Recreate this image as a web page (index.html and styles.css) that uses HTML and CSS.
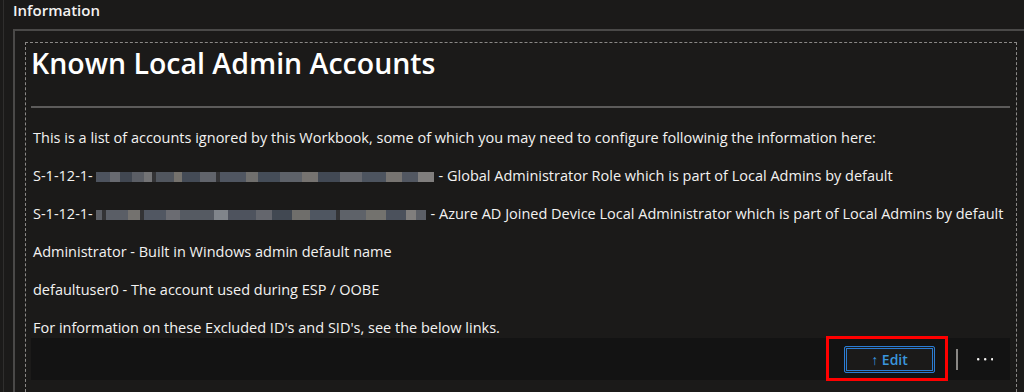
FILE: index.html
```html
<!DOCTYPE html>
<html lang="en">
<head>
    <meta charset="UTF-8">
    <title>Information</title>
    <link rel="stylesheet" href="styles.css">
</head>
<body>
    <div class="page">
        <h2 class="section-title">Information</h2>

        <div class="group">
            <div class="text-step">
                <h1>Known Local Admin Accounts</h1>
                <hr>
                <p>This is a list of accounts ignored by this Workbook, some of which you may need to configure followinig the information here:</p>
                <p>S-1-12-1-<span class="blurred sid-a"></span> - Global Administrator Role which is part of Local Admins by default</p>
                <p>S-1-12-1-<span class="blurred sid-b"></span> - Azure AD Joined Device Local Administrator which is part of Local Admins by default</p>
                <p>Administrator - Built in Windows admin default name</p>
                <p>defaultuser0 - The account used during ESP / OOBE</p>
                <p>For information on these Excluded ID's and SID's, see the below links.</p>

                <div class="step-toolbar">
                    <div class="edit-wrap">
                        <button class="edit-btn">&#8593; Edit</button>
                        <span class="highlight"></span>
                    </div>
                    <span class="divider"></span>
                    <svg class="more" width="16" height="4" viewBox="0 0 16 4">
                        <rect x="0" y="1" width="2.4" height="2.4" rx="1" fill="#f3f2f1"/>
                        <rect x="7" y="1" width="2.4" height="2.4" rx="1" fill="#f3f2f1"/>
                        <rect x="14" y="1" width="2.4" height="2.4" rx="1" fill="#f3f2f1"/>
                    </svg>
                </div>
            </div>
        </div>
    </div>
</body>
</html>
```

FILE: styles.css
```css
* {
    box-sizing: border-box;
}

body {
    margin: 0;
    background: #1b1a19;
    color: #f3f2f1;
    font-family: 'Open Sans', 'Noto Sans', sans-serif;
    overflow: hidden;
    height: 392px;
}

.page {
    margin-left: 3px;
    margin-right: -10px;
    border-left: 1px solid #2f2e2d;
    padding-left: 9px;
    height: 392px;
    overflow: hidden;
}

.section-title {
    margin: 0 0 9px;
    font-size: 15px;
    line-height: 20px;
    font-weight: 600;
    color: #f3f2f1;
}

.group {
    border-top: 2px solid #4a4948;
    border-left: 2px solid #4a4948;
    padding: 11px 17px 0 10px;
    height: 363px;
}

.text-step {
    border: 1px dashed #8a8886;
    border-bottom: none;
    padding: 0 6px 0 5px;
    height: 350px;
}

h1 {
    margin: 2px 0 0;
    font-size: 28.5px;
    line-height: 36px;
    font-weight: 600;
    color: #ffffff;
}

hr {
    margin: 25px 0 20px;
    border: none;
    border-top: 2px solid #5c5b5a;
}

p {
    margin: 0 0 18px;
    font-size: 14.5px;
    line-height: 20px;
    padding-left: 2px;
    white-space: nowrap;
}

p:last-of-type {
    margin-bottom: 0;
}

.blurred {
    display: inline-block;
    height: 10px;
    margin: 0 1px 0 3px;
    vertical-align: -1px;
    filter: blur(0.6px);
    opacity: 0.8;
}

.sid-a {
    width: 338px;
    background: linear-gradient(90deg,
        #5a6270 0 14px, #7c7f86 14px 24px, #4b5360 24px 36px, #6b6f78 36px 48px, #8a8a8c 48px 56px,
        #3a3a3d 56px 60px, #5f6570 60px 78px, #8c8883 78px 86px, #4f5866 86px 104px, #737780 104px 120px,
        #3a3a3d 120px 124px, #5e6674 124px 150px, #868582 150px 162px, #505a68 162px 184px,
        #6f747d 184px 206px, #8d8a86 206px 222px, #4c5563 222px 244px, #797c84 244px 266px,
        #5a6371 266px 290px, #8e8b87 290px 306px, #606774 306px 322px, #9a9896 322px 338px);
}

.sid-b {
    width: 330px;
    background: linear-gradient(90deg,
        #6b7079 0 6px, #3a3a3d 6px 10px, #6a707a 10px 32px, #8b8985 32px 44px, #3a3a3d 44px 48px,
        #5f6775 48px 70px, #808189 70px 84px, #646a75 84px 118px, #9aa0a8 118px 132px,
        #5b6270 132px 160px, #777a82 160px 176px, #4b5461 176px 196px, #858480 196px 214px,
        #5d6573 214px 240px, #3a3a3d 240px 244px, #6f747d 244px 270px, #8a8884 270px 290px,
        #575f6d 290px 310px, #9a9896 310px 320px, #6b7079 320px 330px);
}

.step-toolbar {
    display: flex;
    align-items: center;
    justify-content: flex-end;
    height: 42px;
    background: #131313;
    padding-right: 17px;
}

.edit-wrap {
    position: relative;
    margin-right: 21px;
}

.edit-btn {
    display: block;
    width: 91px;
    height: 27px;
    padding: 0;
    background: #1b1a19;
    border: 1px solid #2b7cd3;
    box-shadow: inset 0 0 0 1px #1b1a19, inset 0 0 0 2px #2b7cd3;
    border-radius: 2px;
    color: #3a96dd;
    font-family: 'Open Sans', 'Noto Sans', sans-serif;
    font-size: 14px;
    font-weight: 600;
}

.highlight {
    position: absolute;
    left: -18px;
    top: -10px;
    width: 122px;
    height: 45px;
    border: 3px solid #ff0000;
}

.divider {
    width: 2px;
    height: 21px;
    background: #8a8886;
    margin-right: 19px;
}

.more {
    display: block;
}
```
